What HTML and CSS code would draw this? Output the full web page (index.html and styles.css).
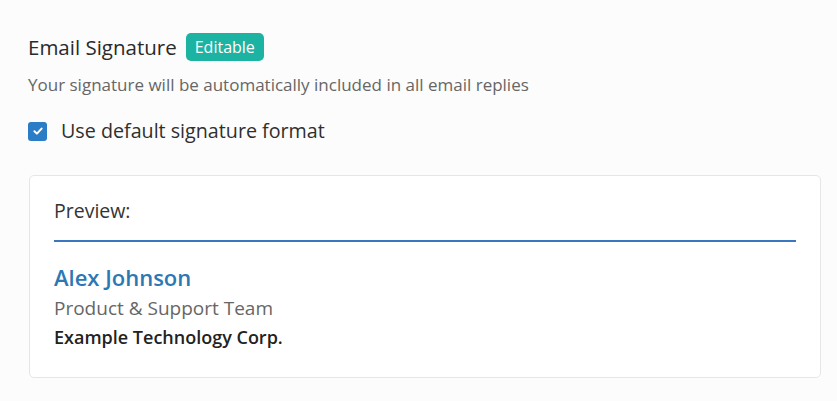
FILE: index.html
```html
<!DOCTYPE html>
<html>
<head>
<meta charset="utf-8">
<link rel="stylesheet" href="styles.css">
</head>
<body>
<div class="page">
  <div class="header">
    <span class="title">Email Signature</span>
    <span class="badge">Editable</span>
  </div>
  <p class="subtitle">Your signature will be automatically included in all email replies</p>
  <label class="check-row">
    <span class="checkbox">
      <svg width="12" height="12" viewBox="0 0 12 12"><path d="M2.4 6.2 L4.9 8.6 L9.6 3.6" fill="none" stroke="#fff" stroke-width="2" stroke-linecap="round" stroke-linejoin="round"/></svg>
    </span>
    <span class="check-label">Use default signature format</span>
  </label>
  <div class="card">
    <div class="preview-label">Preview:</div>
    <div class="divider"></div>
    <div class="sig-name">Alex Johnson</div>
    <div class="sig-team">Product &amp; Support Team</div>
    <div class="sig-company">Example Technology Corp.</div>
  </div>
</div>
</body>
</html>
```
FILE: styles.css
```css
html, body {
  margin: 0;
  padding: 0;
  background: #fcfcfc;
}
body {
  font-family: "Open Sans", "Noto Sans", sans-serif;
  color: #2b2b2b;
}
.page {
  padding: 33px 16px 0 28px;
}
.header {
  display: flex;
  align-items: center;
  gap: 9px;
  height: 28px;
}
.title {
  font-size: 20.5px;
  line-height: 28px;
  color: #2a2a2a;
}
.badge {
  background: #1db3a2;
  color: #fff;
  font-size: 16px;
  line-height: 28px;
  height: 28px;
  padding: 0 9px;
  border-radius: 5px;
}
.subtitle {
  margin: 12px 0 0 0;
  font-size: 17px;
  line-height: 24px;
  color: #666;
}
.check-row {
  display: flex;
  align-items: center;
  gap: 14px;
  margin-top: 20px;
  height: 28px;
}
.checkbox {
  width: 19px;
  height: 19px;
  border-radius: 3px;
  background: #2b7cc6;
  display: flex;
  align-items: center;
  justify-content: center;
}
.check-label {
  font-size: 19.7px;
  line-height: 28px;
  color: #2f2f2f;
}
.card {
  margin-top: 30px;
  margin-left: 1px;
  width: 792px;
  height: 203px;
  box-sizing: border-box;
  background: #fff;
  border: 1px solid #e6e6e6;
  border-radius: 5px;
  padding: 22px 25px 0 24px;
}
.preview-label {
  font-size: 19.5px;
  line-height: 26px;
  color: #333;
}
.divider {
  margin-top: 16px;
  height: 2px;
  width: 742px;
  background: #3a77bf;
}
.sig-name {
  margin-top: 22px;
  font-size: 22px;
  line-height: 26px;
  font-weight: 600;
  color: #2b78b4;
}
.sig-team {
  margin-top: 6px;
  font-size: 19px;
  line-height: 24px;
  color: #666;
}
.sig-company {
  margin-top: 5px;
  font-size: 18px;
  line-height: 24px;
  font-weight: 600;
  color: #222;
}
```
